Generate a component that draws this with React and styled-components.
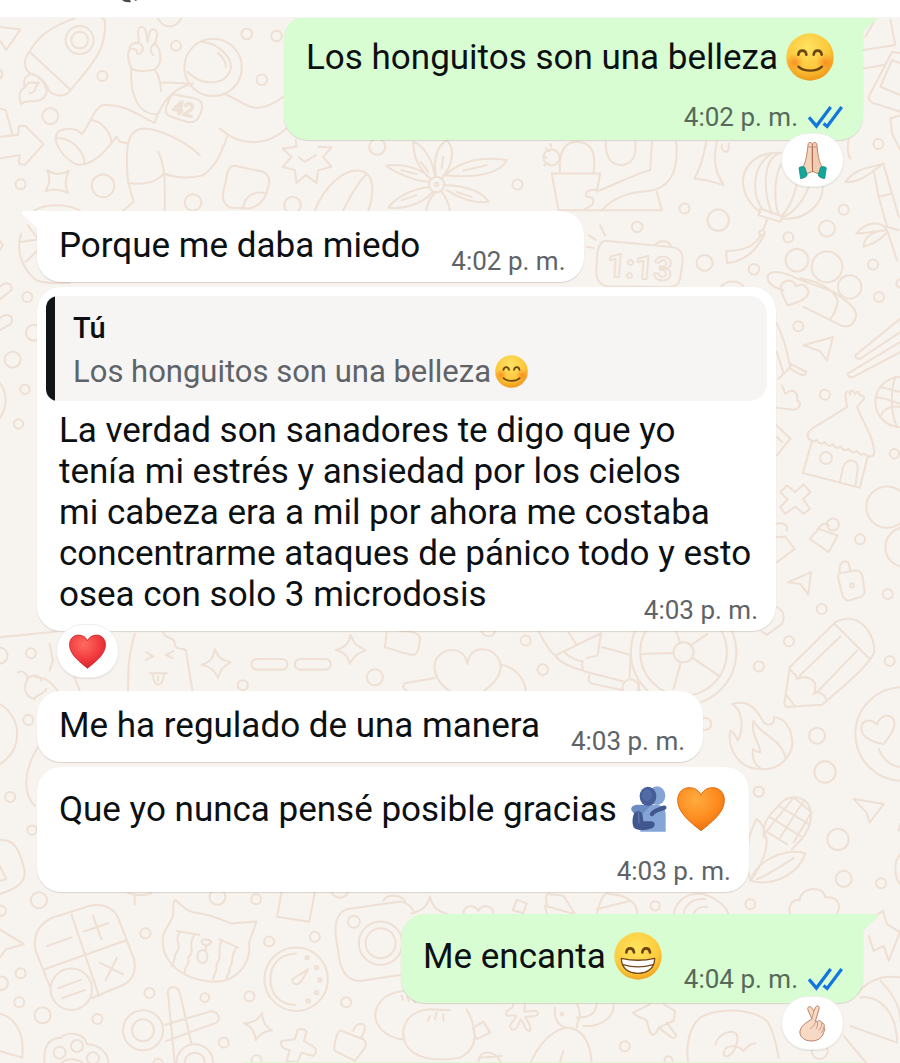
import React from "react";
import styled, { createGlobalStyle } from "styled-components";

const GlobalStyle = createGlobalStyle`
  * {
    box-sizing: border-box;
  }

  body {
    margin: 0;
    background: #f7f3ee;
    font-family: Roboto, "Liberation Sans", sans-serif;
  }
`;

const Page = styled.div`
  position: relative;
  min-height: 100vh;
  overflow: hidden;
`;

const Wallpaper = styled.svg`
  position: absolute;
  top: 0;
  left: 0;
  width: 100%;
  height: 100%;
  fill: none;
  stroke: #eee0d4;
  stroke-width: 6;
  stroke-linecap: round;
  stroke-linejoin: round;
`;

const Header = styled.header`
  position: relative;
  z-index: 2;
  height: 18px;
  padding-left: 121px;
  background: #ffffff;
  border-bottom: 1px solid #f6f4f2;
`;

const HeaderMark = styled.svg`
  display: block;
  width: 18px;
  height: 4px;
`;

const Feed = styled.main`
  position: relative;
  display: flex;
  flex-direction: column;
  margin-top: -3px;
  padding: 0 37px;
`;

const Bubble = styled.article`
  position: relative;
  align-self: ${props => (props.$mine ? "flex-end" : "flex-start")};
  max-width: 90%;
  margin-bottom: ${props => props.$gap}px;
  border-radius: 24px;
  border-top-left-radius: ${props => (props.$tail && !props.$mine ? 0 : 24)}px;
  border-top-right-radius: ${props => (props.$tail && props.$mine ? 0 : 24)}px;
  background: ${props => (props.$mine ? "#d8fdd2" : "#ffffff")};
  box-shadow: 0 1px 1px rgba(60, 50, 40, 0.16);
`;

const TailShape = styled.svg`
  position: absolute;
  top: 0;
  width: 17px;
  height: 18px;
  fill: ${props => (props.$mine ? "#d8fdd2" : "#ffffff")};
  ${props => (props.$mine ? "right: -16px;" : "left: -16px;")}
`;

const InlineBody = styled.div`
  display: flex;
  align-items: flex-end;
  gap: ${props => (props.$mine ? 22 : 31)}px;
  padding: ${props => (props.$mine ? "14px 20px 9px" : "14px 18px 6px")};
  padding-left: 22px;
`;

const StackedBody = styled.div`
  display: flex;
  flex-direction: column;
  gap: ${props => (props.$mine ? 17 : 19)}px;
  padding: ${props => (props.$mine ? "14px 20px 8px" : "14px 18px 6px")};
  padding-left: 22px;
`;

const QuotedBody = styled.div`
  padding: 9px 18px 6px 22px;
`;

const LastRow = styled.div`
  display: flex;
  align-items: flex-end;
  justify-content: space-between;
  gap: 31px;
`;

const Line = styled.p`
  display: flex;
  align-items: center;
  gap: 8px;
  min-height: ${props => (props.$tall ? 56 : 41)}px;
  margin: 0;
  margin-bottom: ${props => (props.$lift ? 10 : 0)}px;
  padding-right: ${props => props.$inset || 0}px;
  color: #0c1013;
  font-size: 35px;
  line-height: 41px;
`;

const LongText = styled.p`
  max-width: 699px;
  margin: 0;
  color: #0c1013;
  font-size: 35px;
  line-height: 41px;
`;

const Meta = styled.div`
  display: flex;
  align-items: center;
  align-self: flex-end;
  gap: 10px;
  color: ${props => (props.$mine ? "#56695b" : "#5e6368")};
  font-size: 26px;
  line-height: 30px;
  white-space: nowrap;
`;

const Ticks = styled.svg`
  width: 35px;
  height: 24px;
  fill: none;
  stroke: #1375e0;
  stroke-width: 10;
`;

const Emoji = styled.svg`
  flex: none;
  width: ${props => props.$size}px;
  height: ${props => props.$size}px;
`;

const EmojiGroup = styled.span`
  display: flex;
  gap: 4px;
`;

const Reaction = styled.button`
  position: absolute;
  bottom: -47px;
  ${props => (props.$mine ? "right: 19px;" : "left: 19px;")}
  z-index: 1;
  display: flex;
  align-items: center;
  justify-content: center;
  width: 63px;
  height: 54px;
  padding: 0;
  border: 1px solid #f1efec;
  border-radius: 27px;
  background: #ffffff;
  box-shadow: 0 1px 1px rgba(60, 50, 40, 0.1);
`;

const Quote = styled.blockquote`
  display: flex;
  margin: 9px 9px 0;
  border-radius: 12px 18px 18px 12px;
  overflow: hidden;
  background: #f6f5f4;
`;

const QuoteBar = styled.span`
  flex: none;
  width: 9px;
  background: #131415;
`;

const QuoteContent = styled.div`
  padding: 11px 18px 8px;
  line-height: 43px;
`;

const QuoteAuthor = styled.div`
  color: #0c1013;
  font-size: 29px;
  font-weight: 500;
`;

const QuoteText = styled.div`
  display: flex;
  align-items: center;
  gap: 4px;
  color: #5e6368;
  font-size: 31px;
`;

const BubbleEdge = styled.div`
  align-self: flex-end;
  width: 75%;
  height: 2px;
  background: #d8fdd2;
`;

/* Emojis */

const Smile = ({ size = 48 }) => (
  <Emoji $size={size} viewBox="0 0 144 144" role="img" aria-label="😊">
    <defs>
      <radialGradient id="smileFace" cx="0.45" cy="0.3" r="0.75">
        <stop offset="0" stopColor="#ffe262" />
        <stop offset="0.6" stopColor="#fcc83c" />
        <stop offset="1" stopColor="#ec9012" />
      </radialGradient>
      <radialGradient id="smileCheek">
        <stop offset="0" stopColor="#f9801f" stopOpacity="0.8" />
        <stop offset="1" stopColor="#f98b1f" stopOpacity="0" />
      </radialGradient>
    </defs>
    <circle cx="72" cy="72" r="71" fill="url(#smileFace)" />
    <circle cx="26" cy="88" r="27" fill="url(#smileCheek)" />
    <circle cx="118" cy="88" r="27" fill="url(#smileCheek)" />
    <g fill="none" stroke="#6b4410" strokeLinecap="round">
      <path d="M37 65 C39 49 59 49 61 65" strokeWidth="8" />
      <path d="M83 65 C85 49 105 49 107 65" strokeWidth="8" />
      <path d="M37 101 C54 117 91 117 108 101" strokeWidth="7" />
    </g>
  </Emoji>
);

const Grin = () => (
  <Emoji $size={48} viewBox="0 0 144 144" role="img" aria-label="😁">
    <defs>
      <radialGradient id="grinFace" cx="0.45" cy="0.35" r="0.7">
        <stop offset="0" stopColor="#ffe45f" />
        <stop offset="0.7" stopColor="#fccb3c" />
        <stop offset="1" stopColor="#ef9a16" />
      </radialGradient>
    </defs>
    <circle cx="72" cy="72" r="71" fill="url(#grinFace)" />
    <g fill="none" stroke="#6b4410" strokeWidth="8" strokeLinecap="round">
      <path d="M37 61 C39 45 58 45 60 61" />
      <path d="M85 61 C87 45 106 45 108 61" />
    </g>
    <path
      d="M22 79 C52 86 92 86 122 79 C122 109 101 124 72 124 C43 124 22 109 22 79Z"
      fill="#ffffff"
      stroke="#71461a"
      strokeWidth="4"
      strokeLinejoin="round"
    />
    <path
      d="M27 98 C54 106 90 106 117 98"
      fill="none"
      stroke="#71461a"
      strokeWidth="4"
    />
  </Emoji>
);

const Heart = ({ size, id, light, base, dark, label }) => (
  <Emoji $size={size} viewBox="0 0 144 144" role="img" aria-label={label}>
    <defs>
      <radialGradient id={id} cx="0.4" cy="0.28" r="0.8">
        <stop offset="0" stopColor={light} />
        <stop offset="0.6" stopColor={base} />
        <stop offset="1" stopColor={dark} />
      </radialGradient>
    </defs>
    <path
      d="M72 137 C44 115 2 84 2 46 C2 22 18 8 37 8 C54 8 66 17 72 30 C78 17 90 8 107 8 C126 8 142 22 142 46 C142 84 100 115 72 137Z"
      fill={`url(#${id})`}
      stroke={dark}
      strokeWidth="3"
    />
  </Emoji>
);

const Hug = () => (
  <Emoji $size={48} viewBox="73 48 144 144" role="img" aria-label="🫂">
    <ellipse cx="169" cy="80" rx="25" ry="28" fill="#85a3d4" />
    <path
      d="M119 188 L119 128 C124 112 145 107 166 107 C186 107 195 118 195 136 L195 188Z"
      fill="#86a5d7"
    />
    <path
      d="M92 123 C90 112 100 107 115 107 L152 108 C143 117 134 125 129 133 L99 133Z"
      fill="#6d8cc4"
    />
    <path
      d="M101 132 C111 123 124 127 126 139 L128 157 L151 157 C164 157 165 171 156 177 C139 184 111 186 102 178 C93 171 94 145 101 132Z"
      fill="#40578f"
    />
    <path
      d="M114 131 L115 162"
      fill="none"
      stroke="#6a82b5"
      strokeWidth="3"
      strokeLinecap="round"
    />
    <path
      d="M154 135 C159 126 174 121 191 116"
      fill="none"
      stroke="#40578f"
      strokeWidth="13"
      strokeLinecap="round"
    />
    <ellipse cx="142" cy="82" rx="25" ry="29" fill="#465e98" />
    <ellipse cx="139" cy="79" rx="15" ry="18" fill="#526ba5" />
  </Emoji>
);

const Pray = () => (
  <Emoji $size={37} viewBox="69 371 112 112" role="img" aria-label="🙏🏻">
    <path
      d="M112 376 C113 371 122 371 124 376 L125 430 L126 460 L105 468 L95 448 C106 432 108 408 112 376Z"
      fill="#f6d5bd"
      stroke="#bd8467"
      strokeWidth="3"
    />
    <path
      d="M138 376 C136 371 127 371 125 376 L124 430 L125 460 L145 468 L155 448 C144 432 141 408 138 376Z"
      fill="#f3cbb0"
      stroke="#bd8467"
      strokeWidth="3"
    />
    <path d="M125 385 V462" stroke="#a86f58" strokeWidth="3" />
    <path
      d="M112 386 L123 386 M127 386 L138 386"
      stroke="#c59079"
      strokeWidth="3"
    />
    <path
      d="M84 449 C91 444 98 444 102 448 L109 471 C105 479 96 481 89 482Z"
      fill="#14a69a"
      stroke="#0a7f76"
      strokeWidth="2"
    />
    <path
      d="M167 449 C160 444 153 444 149 448 L142 471 C146 479 155 481 162 482Z"
      fill="#14a69a"
      stroke="#0a7f76"
      strokeWidth="2"
    />
  </Emoji>
);

const FingerHeart = () => (
  <Emoji $size={37} viewBox="580 254 112 112" role="img" aria-label="🫰🏻">
    <path
      d="M634 296 L622 268 C620 259 629 256 633 262 L640 272 L646 260 C650 254 658 257 656 265 L645 302 L651 304 C657 298 663 303 664 308 C671 309 673 315 671 321 C675 326 671 333 670 337 C666 352 652 363 633 363 C610 363 596 349 598 333 C600 322 607 315 614 310Z"
      fill="#f7d9c4"
      stroke="#b98065"
      strokeWidth="3"
      strokeLinejoin="round"
    />
    <path
      d="M645 300 C646 310 640 319 630 325 M650 305 C654 315 649 320 647 326 M664 310 C664 320 660 327 656 331 M670 323 C669 331 665 335 662 338 M640 272 L634 296"
      fill="none"
      stroke="#c6947b"
      strokeWidth="3"
      strokeLinecap="round"
    />
  </Emoji>
);

/* Message parts */

const Tail = ({ mine }) => (
  <TailShape $mine={mine} viewBox="0 0 17 18" aria-hidden="true">
    {mine ? (
      <path d="M0 0 H15 Q17 1 16 3 Q9 9 4 14 Q1 17 1 18 H0Z" />
    ) : (
      <path d="M17 0 H2 Q0 1 1 3 Q8 9 13 14 Q16 17 16 18 H17Z" />
    )}
  </TailShape>
);

const Time = ({ mine, children }) => (
  <Meta $mine={mine}>
    <time>{children}</time>
    {mine && (
      <Ticks viewBox="1074 312 108 72" role="img" aria-label="Leído">
        <path d="M1077 349 L1100 376 L1144 317 M1122 368 L1133 377 L1178 317" />
      </Ticks>
    )}
  </Meta>
);

/* Doodles are drawn at three times their size, one group per area */

const Doodles = ({ x, y, circles, d, children }) => (
  <g transform={`translate(${x} ${y}) scale(0.3333)`}>
    {circles.map(([cx, cy, r], index) => (
      <circle key={index} cx={cx} cy={cy} r={r} />
    ))}
    <path d={d} />
    {children}
  </g>
);

const Background = () => (
  <Wallpaper
    viewBox="0 0 900 1063"
    preserveAspectRatio="xMidYMin slice"
    aria-hidden="true"
  >
    {/* astronaut, rocket, flower */}
    <Doodles
      x={0}
      y={0}
      circles={[
        [240, 120, 42], [240, 120, 25], [308, 228, 15], [529, 137, 15],
        [741, 102, 16], [830, 108, 16], [786, 239, 16], [152, 348, 24],
        [63, 552, 15], [310, 557, 34], [580, 607, 25], [878, 615, 25],
        [1132, 440, 24], [640, 202, 86], [1310, 553, 23], [1310, 553, 5],
        [-10, 222, 18]
      ]}
      d="M-5 80 L62 88 L20 150 L0 120
        M225 55 C150 80 110 115 90 155 C70 175 72 210 95 222 C130 230 145 260 150 275 C175 292 200 290 213 270 C270 200 325 150 315 60 L300 50 M90 155 L213 270
        M95 222 C65 230 75 255 75 262 C60 270 55 290 65 312 C75 300 90 305 110 303 C135 300 150 275 135 255 C125 235 110 225 95 222 M76 262 C85 240 100 250 118 248 C100 262 115 275 90 280
        M395 205 C385 180 380 160 390 148 C388 135 405 125 418 130 L415 100 C415 75 435 75 440 100 L443 125 L450 95 C460 80 475 90 472 108 L466 130 C485 150 490 190 465 208 C440 215 410 215 395 205 M418 130 c15 5 15 25 0 32 M390 148 c10 -5 25 0 22 12 M465 130 C450 140 450 155 460 165
        M395 208 C390 290 420 345 470 342 M465 208 C480 230 482 250 484 272 M485 248 C510 245 540 250 570 250
        M608 125 C660 130 705 180 690 215 C670 260 600 255 563 215 M655 160 C670 170 680 190 678 200
        M580 250 C510 265 480 320 465 368 C430 355 380 310 310 315 C280 325 270 380 245 402 C235 385 200 380 175 395 C155 420 185 470 230 493 C280 500 320 450 350 410 L360 425 L385 430
        M275 360 C310 365 335 400 335 430 M172 415 C210 410 255 450 255 493
        M600 465 C560 425 480 385 430 385 C385 390 375 430 385 545 L402 605 L370 632 M475 455 C500 500 495 570 495 630
        M385 548 C420 555 470 550 492 520 C530 535 580 535 610 525 C650 500 665 455 682 410
        M660 385 C720 440 800 440 860 385 M680 285 C730 300 760 360 850 290
        M525 283 L585 295 C610 300 612 320 600 345 C590 368 570 370 550 362 L515 350 C495 345 495 325 505 308 C510 290 515 282 525 283
        M0 410 L55 405 L58 378 L78 378 L132 432 L75 495 L58 490 L60 465 L0 475 M0 325 L18 330 L38 400
        M143 510 C165 525 185 525 208 512 C195 535 195 555 205 578 C185 568 165 565 138 573 C152 550 152 530 143 510Z
        M105 630 C140 610 200 610 240 630 M475 55 C490 85 525 90 545 55
        M705 497 L790 515 C812 525 812 545 802 570 C798 600 770 622 745 625 L690 622 C665 605 665 590 678 545 C682 510 690 495 705 497Z M730 622 C735 590 760 570 798 580
        M888 420 L890 440 L848 445 L875 470 L848 500 L885 510 L890 548 L918 525 L950 548 L955 510 L995 500 L970 470 L995 442 L955 440 M898 472 L915 485 L948 465
        M945 630 C975 560 1030 505 1080 512 C1130 520 1120 590 1105 632 M1030 630 C1060 570 1080 540 1100 522
        M1290 535 C1250 500 1240 460 1240 425 C1270 435 1300 480 1305 530 M1287 545 C1250 545 1190 520 1158 497 C1200 490 1260 500 1292 535 M1287 560 C1230 570 1190 590 1165 622 C1210 630 1270 610 1298 575 M1308 530 C1300 480 1310 440 1340 420 C1370 450 1355 500 1325 535 M1305 577 C1285 600 1280 620 1278 632 M1325 575 C1345 600 1348 620 1350 632
        M1262 485 L1285 515 M1205 510 L1250 522 M1205 600 L1250 585 M1330 470 L1325 505"
    >
      <text
        x="516"
        y="338"
        transform="rotate(13 516 338)"
        fontSize="56"
        strokeWidth="5"
      >
        42
      </text>
    </Doodles>

    {/* cactus, lantern, alarm clock, bamboo */}
    <Doodles
      x={450}
      y={0}
      circles={[
        [202, 553, 15], [304, 472, 24], [561, 680, 16], [703, 625, 15],
        [804, 660, 32], [763, 788, 24], [911, 807, 16], [1014, 711, 15],
        [1130, 685, 24], [1180, 629, 15], [1284, 432, 15], [1268, 793, 15],
        [1286, 890, 15], [1040, 780, 34], [1130, 800, 46], [1198, 860, 35],
        [935, 698, 8]
      ]}
      d="M-15 525 C40 475 110 470 170 480 C150 520 80 535 -15 525 M40 512 L110 495 M-20 555 C60 555 100 580 115 605 C70 612 20 590 -10 570 M20 575 L65 590
        M330 520 C325 450 345 425 380 425 C420 425 440 450 430 520 M305 520 L450 520 L440 575 M305 520 L325 630 L635 630 L620 575
        M467 425 C465 480 490 495 515 495 C550 490 560 460 555 425 M605 425 L600 510 C560 520 500 550 450 570 C420 565 400 575 410 590 C430 590 435 600 425 615 L400 630 M455 630 C500 580 560 575 600 572 C670 560 685 500 678 425
        M280 470 l10 3 M288 445 l10 8 M283 495 l12 -6 M302 440 v-8
        M768 425 C760 470 750 505 733 535 L768 540 L820 555 C800 520 785 490 800 425 M835 430 C840 470 810 455 815 435
        M1010 460 C900 445 870 520 880 560 C885 600 920 630 930 635 M998 655 C1060 660 1120 620 1118 550 M985 460 C935 480 940 580 965 640 M965 460 C900 500 905 590 940 630 M1000 480 C970 520 970 600 985 645 M1075 560 C1060 600 1030 640 998 650 M1040 550 C1030 600 1010 630 995 648
        M930 625 L995 648 L990 665 L925 645Z M952 655 L938 690 M932 705 C910 740 880 752 828 752 L830 788 C880 785 920 750 940 706
        M1245 110 L1275 57 M1240 150 L1335 135 L1320 60 M1240 205 L1300 195 M1350 160 L1325 155 L1255 290 C1255 300 1262 308 1272 310 L1350 335 M1350 190 L1325 180 L1290 260 L1350 285 M1350 345 L1320 355 L1325 400 L1350 450
        M1185 545 C1220 500 1260 505 1300 490 C1270 510 1230 550 1185 545 M1270 510 L1285 590 L1325 580 L1300 495 M1285 590 L1310 680 L1345 690 M1325 580 L1345 650 M1310 690 C1290 655 1240 670 1218 700 C1250 700 1290 690 1310 690 C1270 690 1240 710 1240 740 C1270 730 1290 720 1312 695 L1340 780 M1195 420 C1190 445 1190 460 1200 475
        M465 722 L660 740 C690 742 700 760 697 785 L690 835 C685 855 670 860 660 860 L470 858 C440 850 435 830 440 790 C440 750 445 725 465 722 M615 733 C630 718 655 720 663 738 M410 740 l20 3 M415 705 l22 14 M450 675 l15 30 M812 860 C830 838 865 838 880 860"
    >
      <text
        x="468"
        y="828"
        transform="rotate(4 468 828)"
        fontSize="98"
        fontWeight="700"
        strokeWidth="5"
      >
        1:13
      </text>
    </Doodles>

    {/* ball and pills */}
    <Doodles
      x={0}
      y={200}
      circles={[
        [83, 290, 15], [39, 478, 24], [76, 567, 14], [57, 671, 14],
        [103, 397, 24], [-70, 600, 88]
      ]}
      d="M65 100 C50 140 60 200 110 240 C150 255 190 245 210 248 M60 125 L115 118 M78 185 L115 150 M85 75 L110 110
        M0 260 C20 240 40 250 35 270 L0 298 M0 355 C20 335 45 345 35 370 L0 390 M0 120 L10 135 L0 150"
    />

    {/* bandage, hut, basketball */}
    <Doodles
      x={450}
      y={200}
      circles={[
        [1044, 378, 15], [1124, 583, 15], [1127, 773, 18], [1332, 760, 14],
        [1310, 920, 62], [1350, 250, 12], [1350, 605, 75], [1148, 972, 18]
      ]}
      d="M1000 270 C960 260 945 240 955 222 C970 210 1000 215 1040 235 L1150 275 C1200 310 1225 330 1215 355 C1205 385 1180 380 1165 372 L1060 320 M1050 235 C1120 245 1160 280 1162 305 C1155 340 1145 350 1140 355
        M1012 315 C1000 290 985 265 995 250 C1010 235 1030 240 1038 258 C1060 245 1080 265 1072 285 C1060 300 1030 312 1012 315Z
        M1060 435 L1148 410 L1130 480 L1108 452Z M1350 355 L1215 465 c0 12 10 12 18 8 L1350 395 M1350 425 L1192 520 c0 12 12 12 20 8 L1350 455
        M980 370 C1000 410 1010 450 1020 500 L985 535 M1020 490 L1068 515 C1068 530 1050 525 1020 505 M980 455 L1000 520
        M995 555 L1005 580 C1030 560 1045 580 1040 600 C1055 605 1050 625 1030 628 L980 622
        M1190 620 L1085 685 C1070 695 1070 705 1075 715 q14 12 24 4 q10 18 24 6 q10 18 24 6 q10 18 24 7 q10 18 24 7 q10 18 24 7 q10 16 22 8 q16 14 29 5 C1280 730 1240 670 1220 620 M1190 620 L1185 580 q8 -14 14 2 q5 -25 15 0 q10 -18 14 4 q12 -2 14 8 L1220 620
        M1085 722 L1058 818 L1228 862 L1252 770 M1168 848 L1178 800 C1190 770 1225 775 1222 808 L1215 858
        M1278 590 C1310 595 1330 605 1350 610 M1290 560 L1350 575 M1335 530 C1320 570 1320 640 1340 680 M1290 650 C1300 620 1330 615 1350 620
        M980 675 L1020 715 L980 765 M980 710 l15 15
        M1010 855 L1035 875 L1060 852 L1080 875 L1058 897 L1080 925 L1060 940 L1035 918 L1005 940 L990 920 L1012 897 L990 875Z
        M980 970 C1000 965 1015 975 1010 990 M1100 990 C1110 970 1125 965 1135 975"
    />

    {/* pencil, fire, wheel */}
    <Doodles
      x={600}
      y={530}
      circles={[
        [779, 26, 15], [755, 165, 6], [862, 190, 15], [664, 235, 15],
        [566, 332, 15], [476, 408, 15], [868, 391, 15], [650, 615, 24],
        [674, 724, 32], [476, 783, 15], [250, 365, 30], [250, 365, 130],
        [250, 365, 158], [315, 580, 18], [905, 610, 140], [915, 50, 60],
        [91, 470, 24]
      ]}
      d="M220 367 L122 370 M240 336 L228 303 M272 344 L322 310 M277 382 L355 435 M242 395 L220 474
        M705 275 L568 410 L552 520 C553 528 560 530 570 528 L665 522 C720 475 790 420 820 370 C830 320 780 235 705 275 M703 280 L808 385 M720 318 L598 435 M770 360 L650 485 M568 412 C570 425 590 430 590 445 C620 430 645 450 645 465 C645 485 640 490 640 490 C655 480 675 490 678 510 M560 495 L585 528
        M395 520 C450 505 470 540 490 575 C505 590 525 580 520 560 C560 560 580 610 575 650 C560 700 520 718 480 715 C420 715 380 660 390 600 C400 605 410 620 412 630 C430 600 430 540 395 520Z M460 570 C450 610 480 640 480 665 C470 665 460 655 458 655 C455 680 460 700 480 712 M460 570 C475 610 540 620 555 680
        M850 640 C820 635 780 620 783 590 C785 570 810 560 830 582 C840 550 875 545 882 575 C885 600 860 625 850 640Z M835 655 C850 690 870 705 900 710
        M563 155 L632 125 L624 192 L600 160Z
        M718 125 C715 95 730 88 742 95 C752 105 745 115 750 122 M725 127 L765 120 C780 118 785 130 787 140 L793 185 C793 200 760 205 745 210 C730 210 728 195 725 190 L713 140 C712 130 718 128 725 127Z
        M628 25 L655 -5 L712 15 L685 65Z M528 20 L555 18 L583 55 L530 95 M530 230 C550 240 555 260 545 280 L500 313 L485 303"
    />

    {/* heart and hat between the messages */}
    <Doodles
      x={400}
      y={620}
      circles={[[377, 60, 15], [428, 147, 16], [265, 25, 22]]}
      d="M202 130 C195 90 165 85 140 90 C90 110 90 170 150 212 M202 130 C210 85 240 80 270 90 C320 120 310 170 250 212 M105 172 L15 188 C5 195 10 205 20 210 M302 132 C350 140 375 180 377 210
        M415 30 C430 60 445 90 465 105 L603 38 L592 105 L560 112 M505 35 L528 70 M465 105 C480 125 510 140 550 150 M495 97 C510 110 530 120 548 122 C545 130 545 140 552 152 L668 182 M607 80 L692 103 L688 170 M568 165 C560 185 575 190 590 192 L665 208 M715 180 l3 30
        M0 95 L40 103 C55 100 60 70 60 50 C55 35 20 30 0 32"
    />

    {/* ice lolly and stars */}
    <Doodles
      x={0}
      y={620}
      circles={[
        [94, 98, 15], [86, 298, 15], [32, 529, 15], [97, 628, 14],
        [0, 105, 24], [729, 194, 15], [1125, 170, 24], [-50, 340, 103]
      ]}
      d="M0 50 L170 33 M55 155 C75 145 90 170 80 185 C70 205 80 230 105 235 C110 215 130 230 140 205 M80 185 C85 160 120 160 125 180 M110 170 C140 170 160 190 175 212 M150 70 L160 120 L150 150 M225 170 L240 210
        M405 40 C395 80 385 100 385 210 M490 35 C500 60 525 45 525 70 C530 90 545 80 558 88 L578 210 M440 95 L460 108 L438 118 M520 92 L498 103 L518 112 M450 158 L502 158 M460 160 C460 200 490 205 493 160 M475 165 V180
        M645 85 C660 120 665 115 692 125 C665 140 662 150 655 172 C645 150 635 140 605 132 C635 125 640 110 645 85Z
        M1052 43 C1067 78 1072 73 1097 90 C1072 98 1060 108 1050 130 C1045 108 1035 95 1008 88 C1035 83 1048 68 1052 43Z
        M771 115 H847 a16 16 0 0 1 0 32 H771 a16 16 0 0 1 0 -32Z M901 115 H977 a16 16 0 0 1 0 32 H901 a16 16 0 0 1 0 -32Z
        M1160 35 L1155 80 L1200 93
        M0 657 C40 655 60 680 75 750 C80 800 20 810 0 820 M0 735 L20 775 L0 780 M115 380 C70 450 70 520 105 555"
    />

    {/* calculator, cat, stopwatch, camera, scissors */}
    <Doodles
      x={0}
      y={860}
      circles={[
        [118, 118, 24], [4, 150, 15], [437, 217, 15], [63, 337, 15],
        [5, 367, 20], [59, 424, 15], [129, 463, 24], [293, 474, 15],
        [449, 396, 15], [615, 410, 13], [653, 108, 24], [769, 115, 15],
        [808, 242, 15], [945, 228, 15], [749, 406, 15], [1039, 424, 15],
        [672, 545, 15], [770, 598, 15], [475, 608, 15], [1062, 183, 18],
        [1142, 247, 65], [1142, 247, 45], [889, 355, 95], [430, 508, 60],
        [430, 508, 33], [215, 385, 62], [585, 605, 55], [585, 605, 30],
        [180, 575, 18], [232, 555, 18], [280, 592, 18], [1020, 85, 26],
        [922, 290, 5], [950, 320, 5], [960, 357, 5], [950, 395, 5],
        [925, 420, 5]
      ]}
      d="M160 170 L270 135 C320 125 345 150 355 170 L403 295 C410 330 400 355 375 370 L275 412 M152 380 L108 270 C100 225 115 190 160 170 M215 160 L298 405 M135 325 L380 238 M143 255 L215 230 M253 212 L325 187 M280 165 L305 235 M300 305 L370 340 M352 290 L318 358 M175 382 L243 357 M187 412 L257 387
        M528 118 C540 130 560 150 583 155 C630 160 665 175 695 188 L770 182 L748 245 C755 310 710 355 660 362 C560 365 480 310 490 225 C495 200 515 190 520 160 C520 140 520 115 528 118Z M530 210 L598 222 M658 235 L715 260
        M540 215 C520 240 550 250 530 275 C520 290 530 300 515 315 M585 222 C560 250 590 270 565 290 C575 310 550 320 555 335 M665 240 C650 270 670 290 650 310 C655 330 640 340 640 355 M708 262 C690 290 705 300 690 320 C690 340 680 345 680 355
        M605 240 q15 -10 30 2 q-8 15 -18 10 q-10 0 -12 -12 M618 252 L618 268 M608 268 c20 0 20 38 0 38 c-20 0 -20 -38 0 -38
        M888 278 C840 280 812 310 812 355 C812 400 840 430 885 432 M925 325 L905 360 C895 375 875 372 878 355Z
        M845 95 L832 168 L928 183 L945 95 M1040 145 L1200 122 C1225 125 1235 140 1240 150 M1040 145 C1005 160 1000 200 1015 270 C1020 330 1040 360 1080 360 L1200 342 M1150 120 C1160 100 1200 100 1215 120 M1290 108 C1280 145 1260 150 1235 158 M1290 108 C1300 140 1310 150 1340 158
        M505 400 C500 375 530 370 540 395 L575 548 M505 400 L525 605 M495 492 L630 452 C655 448 665 475 650 485 L500 540
        M787 455 C790 490 800 500 817 508 C790 512 778 520 768 538 C765 510 755 495 732 487 C760 485 775 480 787 455Z
        M845 540 L885 535 L893 508 C900 500 915 505 920 512 L912 540 L945 560 C950 570 948 580 940 585 L905 575 L893 603 L860 600 L870 567 C850 565 840 555 845 540Z
        M1020 508 L1090 535 C1100 545 1100 550 1095 560 L1065 600 L1005 570 C1000 560 1010 515 1020 508 M1060 510 C1070 480 1100 485 1095 505 L1085 530
        M135 610 C130 560 145 530 185 530 C200 510 255 515 262 550 C300 550 330 580 325 610 M180 610 C200 590 230 590 255 610
        M1210 390 C1130 400 1110 460 1140 500 C1160 525 1190 535 1212 535 M1350 448 L1290 445 C1220 450 1200 500 1215 545 C1235 590 1300 605 1380 590 C1440 560 1430 500 1400 445 M1205 405 l5 12 M1222 408 l5 12 M1240 415 l5 10 M1310 455 l-5 20 M1330 460 l0 20 M1290 465 l-6 15
        M0 205 L73 250 L20 265 L0 290 M0 458 C50 470 75 520 68 590 L0 570 M385 97 Q425 110 455 97 M405 105 V130"
    />

    {/* corn, cloud, crown, pin */}
    <Doodles
      x={450}
      y={780}
      circles={[
        [925, 33, 15], [1163, 176, 32], [1180, 294, 24], [1292, 307, 15],
        [900, 370, 15], [615, 375, 14], [524, 796, 15], [655, 838, 12],
        [1108, 810, 24], [335, 700, 4]
      ]}
      d="M940 170 C935 130 950 110 985 75 C1010 40 1050 45 1070 65 C1095 100 1080 150 1040 190 L1025 205 M985 75 L1075 130 M960 110 L1050 165 M945 150 L1010 190 M1030 50 L1085 95 M1060 60 L990 170 M1030 50 L950 150 M1080 100 L1030 185
        M918 115 C890 170 880 230 900 300 C930 260 960 200 945 160 C940 140 930 120 918 115 M900 300 C920 240 1000 200 1065 217 C1050 270 980 320 900 300 M920 295 C960 280 1000 250 1030 232
        M1210 55 L1300 70 L1258 125 L1248 95Z M1020 400 C1010 370 1030 355 1048 358 C1050 320 1120 310 1125 350 C1160 345 1175 370 1160 400
        M40 400 C40 370 75 370 85 390 C95 370 130 370 130 400 M200 357 L230 367 L220 397 L188 388Z M290 400 L285 375 L375 400 M290 370 C285 345 290 335 300 340 L340 345 L375 400 M440 400 C450 360 460 330 480 340 C530 340 565 370 560 400 M440 385 L540 360
        M670 400 C680 350 720 335 760 340 C800 350 830 380 835 400 M700 400 C705 370 730 350 765 355 M730 400 C735 385 750 375 770 378
        M1250 420 L1298 390 L1310 430 L1350 455 M1255 465 L1270 510 L1300 495 L1315 540 L1350 450 M1350 130 L1345 150 M1350 220 C1330 240 1330 290 1350 310
        M190 670 C190 690 165 680 168 700 C170 710 190 700 198 705 C190 730 170 730 185 745 C205 750 205 725 212 715 C225 730 225 755 240 748 C245 730 230 720 225 708 C245 705 270 710 262 692 C250 685 230 695 222 692 L225 670
        M100 722 L120 755 L80 775 L68 742Z M315 680 C310 710 320 730 345 740 C310 750 270 780 240 849 M345 740 C390 740 420 770 425 849 M380 670 C400 700 380 720 380 740 M440 670 C435 700 420 710 380 710 M490 670 C495 700 460 740 400 735 M340 810 L328 849
        M85 840 C90 800 140 810 155 849 M90 830 L155 825
        M600 670 L548 695 C560 710 580 710 590 720 L600 755 C610 770 620 755 625 740 L670 720 L675 690 L640 670 M625 740 L665 770 C680 775 680 760 672 755 L650 725
        M715 849 C705 800 715 740 750 710 C800 680 900 680 950 720 C970 750 980 800 985 830 M795 790 C810 750 860 740 862 770 C860 810 830 840 820 820 C820 790 860 790 880 810 C890 795 900 790 915 787
        M1220 640 C1250 600 1290 580 1350 590 M1230 650 C1290 640 1340 700 1340 785 L1200 735 M1290 600 C1330 640 1350 680 1350 720 M1180 765 L1250 849"
    />
  </Wallpaper>
);

export default function App() {
  return (
    <Page>
      <GlobalStyle />
      <Background />
      <Header>
        <HeaderMark viewBox="0 0 18 4" aria-hidden="true">
          <path d="M1 0 Q4 3 10 2 L9 0Z M13 0 L16 0 L15 1Z" fill="#4a4a4a" />
        </HeaderMark>
      </Header>
      <Feed>
        <Bubble $mine $tail $gap={71}>
          <Tail mine />
          <StackedBody $mine>
            <Line $tall $inset={9}>
              Los honguitos son una belleza
              <Smile />
            </Line>
            <Time mine>4:02 p. m.</Time>
          </StackedBody>
          <Reaction $mine type="button">
            <Pray />
          </Reaction>
        </Bubble>

        <Bubble $tail $gap={5}>
          <Tail />
          <InlineBody>
            <Line $lift>Porque me daba miedo</Line>
            <Time>4:02 p. m.</Time>
          </InlineBody>
        </Bubble>

        <Bubble $gap={60}>
          <Quote>
            <QuoteBar />
            <QuoteContent>
              <QuoteAuthor>Tú</QuoteAuthor>
              <QuoteText>
                Los honguitos son una belleza
                <Smile size={33} />
              </QuoteText>
            </QuoteContent>
          </Quote>
          <QuotedBody>
            <LongText>
              La verdad son sanadores te digo que yo tenía mi estrés y ansiedad
              por los cielos
              <br />
              mi cabeza era a mil por ahora me costaba concentrarme ataques de
              pánico todo y esto
            </LongText>
            <LastRow>
              <Line $lift>osea con solo 3 microdosis</Line>
              <Time>4:03 p. m.</Time>
            </LastRow>
          </QuotedBody>
          <Reaction type="button">
            <Heart
              size={37}
              id="redHeart"
              light="#ff6b60"
              base="#f0383c"
              dark="#c81f28"
              label="❤️"
            />
          </Reaction>
        </Bubble>

        <Bubble $gap={5}>
          <InlineBody>
            <Line $lift>Me ha regulado de una manera</Line>
            <Time>4:03 p. m.</Time>
          </InlineBody>
        </Bubble>

        <Bubble $gap={22}>
          <StackedBody>
            <Line $tall $inset={6}>
              Que yo nunca pensé posible gracias
              <EmojiGroup>
                <Hug />
                <Heart
                  size={48}
                  id="orangeHeart"
                  light="#ffab3f"
                  base="#fd8a1e"
                  dark="#e0690c"
                  label="🧡"
                />
              </EmojiGroup>
            </Line>
            <Time>4:03 p. m.</Time>
          </StackedBody>
        </Bubble>

        <Bubble $mine $tail $gap={59}>
          <Tail mine />
          <InlineBody $mine>
            <Line $tall $lift>
              Me encanta
              <Grin />
            </Line>
            <Time mine>4:04 p. m.</Time>
          </InlineBody>
          <Reaction $mine type="button">
            <FingerHeart />
          </Reaction>
        </Bubble>

        <BubbleEdge />
      </Feed>
    </Page>
  );
}
